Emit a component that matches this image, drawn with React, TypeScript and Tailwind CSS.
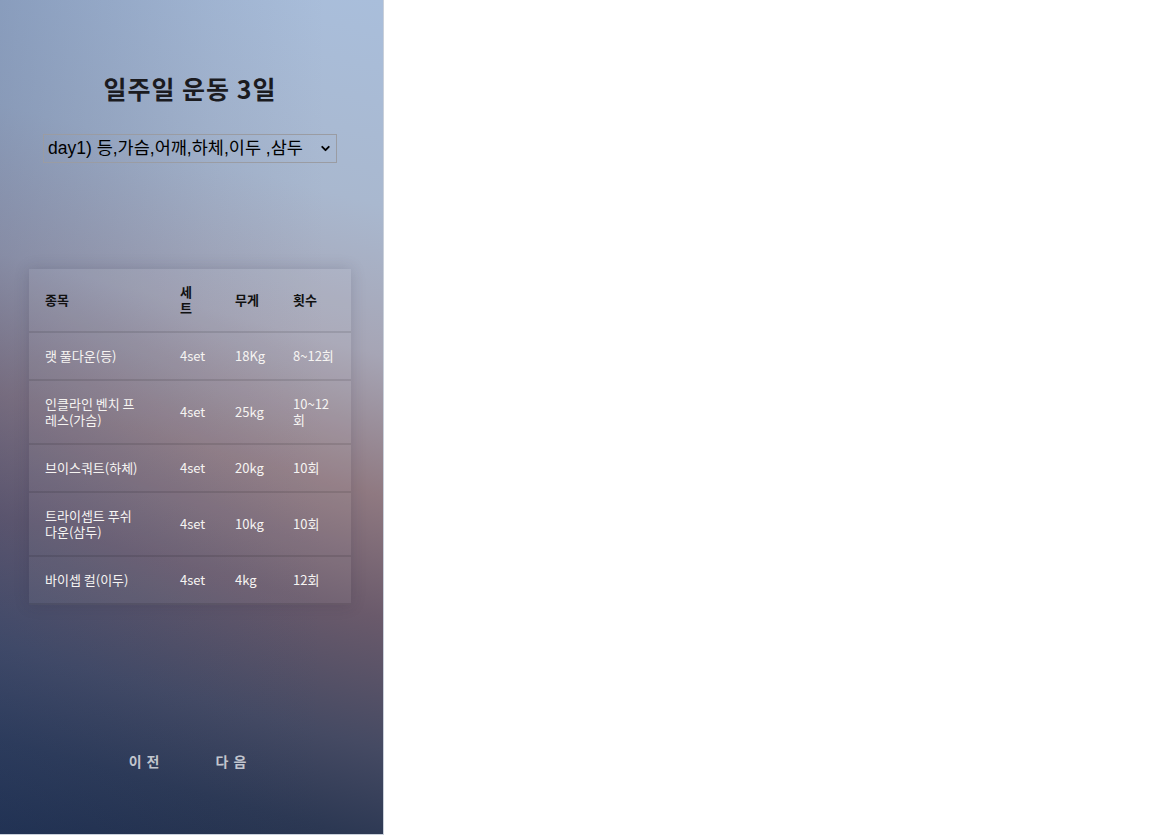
import { ChevronDown } from "lucide-react"

const rows = [
  { name: "랫 풀다운(등)", set: "4set", weight: "18Kg", reps: "8~12회" },
  { name: "인클라인 벤치 프레스(가슴)", set: "4set", weight: "25kg", reps: "10~12회" },
  { name: "브이스쿼트(하체)", set: "4set", weight: "20kg", reps: "10회" },
  { name: "트라이셉트 푸쉬 다운(삼두)", set: "4set", weight: "10kg", reps: "10회" },
  { name: "바이셉 컬(이두)", set: "4set", weight: "4kg", reps: "12회" },
]

const font = "font-['Noto_Sans_CJK_KR','Noto_Sans',sans-serif]"

export default function App() {
  return (
    <div className="min-h-[835px] bg-white">
      <div
        className={`relative flex h-[835px] w-[384px] flex-col items-center overflow-hidden border-r border-b border-[#c9d0da] pr-[3px] bg-[linear-gradient(195deg,#a9bedb_0%,#a9b8cf_22%,#a6a5b5_38%,#8f7981_53%,#6a5a6b_66%,#454a63_80%,#2c3853_90%,#1d2b47_100%)] ${font}`}
      >
        {/* cooler blue tint on the left side */}
        <div className="pointer-events-none absolute inset-0 bg-[linear-gradient(90deg,rgba(45,70,120,0.26)_0%,rgba(45,70,120,0.08)_55%,rgba(45,70,120,0)_85%)]" />

        <h1 className="relative mt-[72px] text-[25px] leading-8 font-bold tracking-[1px] text-[#1b1b1f]">
          일주일 운동 3일
        </h1>

        <div className="relative mt-[30px] h-[29px] w-[294px]">
          <select className="h-full w-full appearance-none border border-[#9a9ca3] bg-transparent pl-[4px] font-['Liberation_Sans','Noto_Sans_CJK_KR',sans-serif] text-[17.5px] text-black outline-none">
            <option>day1) 등,가슴,어깨,하체,이두 ,삼두</option>
          </select>
          <ChevronDown
            size={13}
            strokeWidth={3.5}
            className="pointer-events-none absolute top-[8px] right-[5px] text-black"
          />
        </div>

        <table className="relative mt-[106px] w-[322px] table-fixed border-collapse bg-white/[0.06] text-[13px] leading-4 shadow-[0_0_14px_rgba(40,40,60,0.18)]">
          <colgroup>
            <col className="w-[135px]" />
            <col className="w-[55px]" />
            <col className="w-[58px]" />
            <col className="w-[74px]" />
          </colgroup>
          <thead>
            <tr className="border-b-2 border-black/10">
              <th className="py-[15px] pr-[25px] pl-4 text-left font-semibold text-[#111]">종목</th>
              <th className="px-4 py-[15px] text-left font-semibold text-[#111]">세트</th>
              <th className="px-4 py-[15px] text-left font-semibold text-[#111]">무게</th>
              <th className="px-4 py-[15px] text-left font-semibold text-[#111]">횟수</th>
            </tr>
          </thead>
          <tbody>
            {rows.map((r) => (
              <tr key={r.name} className="border-b-2 border-black/10 text-[#f6f4f2]">
                <td className="py-[15px] pr-[25px] pl-4">{r.name}</td>
                <td className="px-4 py-[15px] whitespace-nowrap">{r.set}</td>
                <td className="px-4 py-[15px] whitespace-nowrap">{r.weight}</td>
                <td className="px-4 py-[15px]">{r.reps}</td>
              </tr>
            ))}
          </tbody>
        </table>

        <div className="relative mt-[146px] flex gap-[51px] text-[14px] leading-5 font-semibold text-[#c2c6ce]">
          <button className="tracking-[5px]">이전</button>
          <button className="tracking-[5px]">다음</button>
        </div>
      </div>
    </div>
  )
}
